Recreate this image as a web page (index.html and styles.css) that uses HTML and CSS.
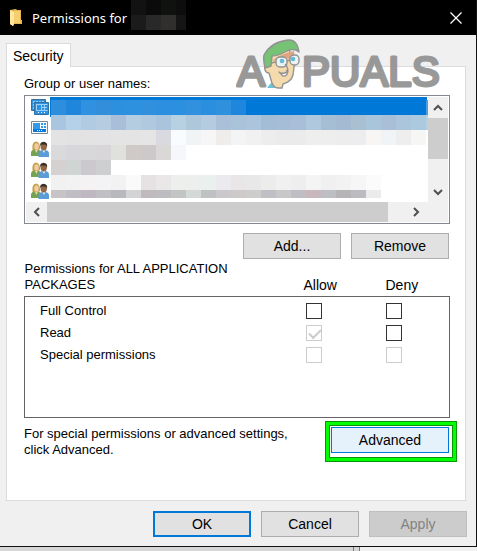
FILE: index.html
```html
<!DOCTYPE html>
<html lang="en">
<head>
<meta charset="utf-8">
<title>Permissions</title>
<link rel="stylesheet" href="styles.css">
</head>
<body>
<svg class="defs" aria-hidden="true">
  <symbol id="users" viewBox="0 0 18 16">
    <path d="M0 15V12Q0 9 3 8.500L7 8.500Q10 9 10 12V15Z" fill="#74a453"/>
    <path d="M3.500 8H7L5.500 12Z" fill="#f2d3b0"/>
    <path d="M1.500 9Q0.500 1 5 0.500Q9.500 1 9 8L7 9H3Z" fill="#c3a14a"/>
    <ellipse cx="5.500" cy="5.500" rx="2.200" ry="3.200" fill="#f0cda6"/>
    <path d="M7.500 16V12.500Q8 9.500 11 9H14.500Q18 9.500 18 12.500V16Z" fill="#5b9bd8"/>
    <path d="M11 8.500H14.500L13 12Z" fill="#e8f0f7"/>
    <ellipse cx="12.700" cy="5.500" rx="3.200" ry="4" fill="#936744"/>
    <path d="M9.300 5Q8.500 1 12.500 0.700Q17 1 16 6L15 3.800L10.500 3.500Z" fill="#3a3027"/>
  </symbol>
  <symbol id="package" viewBox="0 0 17 13">
    <path d="M.5.500H16.500V12.500H.500Z" fill="#fff" stroke="#7d8791"/>
    <path d="M2 2H9V8H2ZM10 2H12V4H10ZM13 2H15V4H13ZM10 5H12V7H10ZM13 5H15V7H13Z" fill="#3198ea"/>
    <path d="M2 8H15V11H2Z" fill="#0879d9"/>
    <path d="M6 9H7V10H6ZM8 9H9V10H8ZM10 9H11V10H10Z" fill="#fff"/>
  </symbol>
</svg>
<main class="dialog">
  <header class="titlebar">
    <svg class="folder" viewBox="0 0 13 18" aria-hidden="true">
      <path d="M0 1L6 0 7 1H11V11H12V15H4L3 17 0 15Z" fill="#e6b74d"/>
      <path d="M0 1L4 3V15L3 17 0 15Z" fill="#ffe69a"/>
      <path d="M4 2H10V14H4Z" fill="#f6cf70"/>
    </svg>
    <h1>Permissions for</h1>
    <svg class="title-mask" viewBox="0 0 55 30" aria-hidden="true">
      <path d="M0 0H55V30H0Z" fill="#0d0d0d"/>
      <path d="M0 0H15V15H0Z" fill="#121212"/><path d="M15 0H30V15H15Z" fill="#0a0b0a"/><path d="M30 0H45V15H30Z" fill="#101210"/>
      <path d="M0 15H15V30H0Z" fill="#1b1b1b"/><path d="M15 15H30V30H15Z" fill="#292929"/><path d="M30 15H45V30H30Z" fill="#302f2e"/><path d="M45 15H55V30H45Z" fill="#151515"/>
    </svg>
    <button class="close" type="button" aria-label="Close">
      <svg viewBox="0 0 12 12"><path d="M.5.500L11.500 11.500M11.500.500L.500 11.500" stroke="#fff" stroke-width="1.300"/></svg>
    </button>
  </header>

  <div class="body">
    <div class="tabs" role="tablist"><button class="tab" type="button" role="tab" aria-selected="true">Security</button></div>
    <section class="panel">
      <h2>Group or user names:</h2>
      <div class="listbox">
        <ul class="names">
          <li class="selected">
            <svg class="icon" viewBox="0 0 18 16" aria-hidden="true">
              <path d="M.5.500H14.500V11.500H.500Z" fill="#3391df" stroke="#34719f"/>
              <path d="M2 2.500H13M2.500 2V10M8.500 2V5M2 9.500H5" stroke="#8bc7f5" stroke-dasharray="2 1"/>
              <path d="M3.500 3.500H17.500V15.500H3.500Z" fill="#2d91e3" stroke="#34719f"/>
              <path d="M5 5.500H16.500M5.500 5V11.500H16.500M10.500 5V11M13.500 5V11M10 8.500H16" fill="none" stroke="#9bd0f8"/>
              <path d="M7 13.500H14" stroke="#fff" stroke-dasharray="1 2"/>
            </svg><span class="name"></span></li>
          <li><svg class="icon package" aria-hidden="true"><use href="#package"/></svg></li>
          <li><svg class="icon" aria-hidden="true"><use href="#users"/></svg></li>
          <li><svg class="icon" aria-hidden="true"><use href="#users"/></svg></li>
          <li><svg class="icon" aria-hidden="true"><use href="#users"/></svg></li>
        </ul>
        <svg class="mosaic" viewBox="0 0 377 99" shape-rendering="crispEdges" aria-hidden="true"></svg>
        <div class="vscroll">
          <button type="button" aria-label="Scroll up"><svg viewBox="0 0 10 10"><path d="M1 7L5 3 9 7"/></svg></button>
          <span class="thumb"></span>
          <button class="end" type="button" aria-label="Scroll down"><svg viewBox="0 0 10 10"><path d="M1 3L5 7 9 3"/></svg></button>
        </div>
        <div class="hscroll">
          <button type="button" aria-label="Scroll left"><svg viewBox="0 0 10 10"><path d="M7 1L3 5 7 9"/></svg></button>
          <span class="thumb"></span>
          <button class="end" type="button" aria-label="Scroll right"><svg viewBox="0 0 10 10"><path d="M3 1L7 5 3 9"/></svg></button>
        </div>
      </div>

      <div class="actions">
        <button class="btn" type="button">Add...</button>
        <button class="btn" type="button">Remove</button>
      </div>

      <table class="permissions">
        <thead>
          <tr><th class="subject" scope="col">Permissions for ALL APPLICATION PACKAGES</th><th class="choice" scope="col">Allow</th><th class="choice deny" scope="col">Deny</th></tr>
        </thead>
        <tbody>
          <tr><th scope="row">Full Control</th><td><input type="checkbox" aria-label="Allow Full Control"></td><td><input type="checkbox" aria-label="Deny Full Control"></td></tr>
          <tr><th scope="row">Read</th><td><input type="checkbox" aria-label="Allow Read" checked disabled></td><td><input type="checkbox" aria-label="Deny Read"></td></tr>
          <tr><th scope="row">Special permissions</th><td><input type="checkbox" aria-label="Allow Special permissions" disabled></td><td><input type="checkbox" aria-label="Deny Special permissions" disabled></td></tr>
          <tr class="filler"><td colspan="3"></td></tr>
        </tbody>
      </table>

      <div class="advanced">
        <p>For special permissions or advanced settings, click Advanced.</p>
        <div class="highlight"><button class="btn" type="button">Advanced</button></div>
      </div>

      <svg class="brand" viewBox="0 0 214 64" role="img" aria-label="Appuals">
        <g class="brand-text"><text x="1" y="49">A</text><text x="66" y="49">PUALS</text></g>
        <g stroke="#8e8e8e" stroke-width="1.400" stroke-linejoin="round">
          <path d="M31 51Q34 47 36 45L39 47 45 51Z" fill="#65bfd6" stroke="none"/>
          <path d="M31 29Q28 29 29 33Q30 36 33 36L36 46Q38 51 42 51H46L47 47Q55 45 57 38L59 23 51 10 35 17Z" fill="#f5d9a9"/>
          <path d="M36 24Q44 17 58 14L59 23Q52 20 42 23Z" fill="#dea27b" stroke="none"/>
          <path d="M29 31Q27 22 28 18Q35 5 52 3Q61 2 63 15Q57 10 49 15Q42 19 36 19L35 29Z" fill="#70c16f"/>
          <rect x="40" y="20" width="11" height="10" rx="4" fill="#edf3f4"/>
          <rect x="54" y="18" width="9" height="10" rx="4" fill="#edf3f4"/>
          <path d="M51 24L54 23M40 25L35 26" fill="none"/>
          <path d="M49 27Q54 33 50 34" fill="none"/>
          <path d="M43 35Q48 38 52 34Q51 40 47 39Z" fill="#fff"/>
          <circle cx="46" cy="24" r="2.300" fill="#58b9d6" stroke="none"/>
          <circle cx="57" cy="22" r="2.300" fill="#58b9d6" stroke="none"/>
        </g>
      </svg>
    </section>

    <footer class="footer">
      <button class="btn default" type="button">OK</button>
      <button class="btn" type="button">Cancel</button>
      <button class="btn" type="button" disabled>Apply</button>
    </footer>
  </div>
</main>
<div class="behind"><span></span><span></span></div>
<script src="mosaic.js"></script>
</body>
</html>
```
FILE: styles.css
```css
* { box-sizing: border-box; }

body {
  margin: 0;
  min-height: 100vh;
  display: flex;
  flex-direction: column;
  background: #d6d6d6;
  color: #000;
  font: 13px/16px "Liberation Sans", Arial, sans-serif;
}

.defs { position: absolute; width: 0; height: 0; }
svg { display: block; flex: none; }
h1, h2, p, ul { margin: 0; padding: 0; font-size: inherit; font-weight: 400; }
button { font: inherit; color: inherit; }

.dialog {
  background: #f0f0f0;
  border-right: 1px solid #111;
  border-bottom: 1px solid #111;
}

.titlebar {
  display: flex;
  align-items: center;
  height: 35px;
  padding: 0 14px 0 10px;
  background: #000;
  color: #fff;
}
.titlebar h1 { margin-left: 9px; width: 99px; white-space: nowrap; font: 13px/20px "Noto Sans", sans-serif; }
.folder { width: 13px; height: 18px; }
.title-mask { width: 55px; height: 30px; align-self: flex-start; }
.close { margin-left: auto; padding: 0; border: 0; background: none; }
.close svg { width: 12px; height: 12px; }

.body { padding: 8px 9px 9px 6px; }
.tabs { display: flex; }
.tab {
  position: relative;
  z-index: 1;
  height: 24px;
  margin-bottom: -1px;
  padding: 0 6px;
  border: 1px solid #dcdcdc;
  border-bottom: 0;
  background: #fff;
  font-size: 14px;
}

.panel {
  position: relative;
  height: auto;
  margin-right: 1px;
  padding: 9px 15px 42px 17px;
  border: 1px solid #dcdcdc;
  background: #fff;
}

.brand { position: absolute; top: -30px; right: 15px; width: 214px; height: 64px; opacity: .95; pointer-events: none; }
.brand-text {
  font: 400 42px "Liberation Sans", Arial, sans-serif;
  fill: #949494;
  stroke: #949494;
  stroke-width: 3;
  stroke-linejoin: round;
}

.listbox {
  position: relative;
  display: grid;
  grid-template-columns: 1fr 20px;
  grid-template-rows: 105px 20px;
  margin-top: 3px;
  padding: 1px;
  border: 1px solid #828790;
}
.names { list-style: none; }
.names li { display: flex; align-items: center; height: 21px; padding-left: 5px; }
.names .selected { height: 20px; }
.name { flex: 1; align-self: stretch; margin: 0 1px 0 1px; background: #0078d7; }
.icon { width: 18px; height: 16px; }
.icon.package { width: 17px; height: 13px; }
.mosaic { position: absolute; left: 26px; top: 4px; width: 377px; height: 99px; }

.vscroll, .hscroll { display: flex; background: #f0f0f0; }
.vscroll { flex-direction: column; }
.hscroll { grid-column: 1 / 3; padding-right: 22px; }
.vscroll button, .hscroll button { display: grid; place-items: center; width: 21px; height: 20px; padding: 0; border: 0; background: none; }
.vscroll button { width: 20px; height: 21px; }
.vscroll svg, .hscroll svg { width: 10px; height: 10px; fill: none; stroke: #505050; stroke-width: 2; }
.vscroll .thumb { height: 41px; background: #cdcdcd; }
.hscroll .thumb { width: 341px; background: #cdcdcd; }
.end { margin: auto 0 0 auto; }

.btn {
  width: 98px;
  height: 26px;
  padding: 0;
  border: 1px solid #adadad;
  background: #e1e1e1;
  font-size: 14px;
}
.btn.default { border: 2px solid #0078d7; }
.btn:disabled { border-color: #bfbfbf; background: #ccc; color: #838383; }
.actions, .footer { display: flex; justify-content: flex-end; gap: 10px; }
.actions { margin-top: 9px; padding-right: 1px; }
.footer { margin-top: 10px; }

.permissions { width: 100%; margin-top: 1px; border-collapse: collapse; table-layout: fixed; }
.permissions th { padding: 0; text-align: left; font-weight: 400; }
.permissions thead th { padding-top: 1px; padding-bottom: 3px; vertical-align: bottom; }
.permissions thead .subject { padding-right: 60px; }
.permissions .choice { width: 80px; padding-left: 2px; font-size: 14px; }
.permissions .deny { width: 68px; padding-left: 4px; }
.permissions tbody { border: 1px solid #646464; }
.permissions tbody tr { height: 22px; }
.permissions tbody th { padding-left: 15px; }
.permissions td { padding: 0 0 0 4px; }
.permissions tbody tr:first-child { height: 25px; }
.permissions tbody tr:first-child > * { padding-top: 3px; }
.permissions tbody .filler { height: 52px; }

input[type="checkbox"] {
  appearance: none;
  display: block;
  width: 16px;
  height: 16px;
  margin: 0;
  border: 1px solid #333;
  background: #fff;
}
input[type="checkbox"]:disabled { border-color: #ccc; }
input[type="checkbox"]:checked::before {
  content: "";
  display: block;
  width: 10px;
  height: 5px;
  margin: 3px 2px;
  border: solid #ccc;
  border-width: 0 0 2px 2px;
  transform: rotate(-45deg);
}

.advanced { display: flex; justify-content: space-between; margin-top: 8px; }
.advanced p { flex: 1; max-width: 280px; }
.highlight { position: relative; height: 26px; margin: 1px 1px 0 0; }
.highlight::before {
  content: "";
  position: absolute;
  inset: -6px -8px -9px -6px;
  border: 4px solid #0f0;
  outline: 1px solid #079507;
  outline-offset: -1px;
  box-shadow: inset 0 0 0 1px #079507;
  pointer-events: none;
}
.highlight .btn { width: 118px; border-color: #0078d7; background: #e5f1fb; position: relative; }

.behind { flex: 1; display: flex; min-height: 4px; }
.behind span:first-child { width: 354px; border-right: 1px solid #777; }
.behind span:last-child { flex: 1; margin-left: 5px; border-left: 1px solid #777; background: #f0f0f0; }
```
FILE: mosaic.js
```js
// Each row: top, height, then one colour per 15px cell ("-" leaves a cell clear).
const rows = [
  [0, 15, "2f8ddd 1f86dc 2f91df 328edb 2c90df 2d91e0 3090dd 2d8fdf 2b90e0 3191de 2b8fdf 2f91de 1e86dc - - - - - - - - - - - - 4c9de0"],
  [15, 15, "a9c5df b5d1e8 b0cbe2 b6cde1 a9bfd9 b4cde1 b0c9df a9c4dc b7d0e2 afc7da b5cce0 a9c0d8 a9c3d8 adc5dc a3bdd6 a5bdd6 a9bfd8 afc8dd a5bed3 a3bad2 a9bfd2 a9c5dc a9bed7 abc6dc abc9df b5d1e4"],
  [30, 15, "e3e3e4 e2e2e3 e4e3e3 e3e3e5 e5e4e5 e4e4e4 e5e5e5 d9d9df f9fcfe f1f4f4 f5f6f5 efecec f2f4f5 f1f1f1 ededed ebebeb ebebeb eeeeee eeeeee ededee ededef f7f6f4 f1f4f6 eeeeef f6f6f5"],
  [45, 15, "dad9db d7d6da d8d8da d8d6d8 e0e0dd cfcac8 cdc8ca d9d8d6 f5f7fc"],
  [60, 15, "d4d1d0 d0d4d2 ccc9ce cecfd1"],
  [75, 15, "f1f1f1 f2f2f2 f5f2f4 f3f3f5 f2f2f3 fafafa e6e2e4 e9e7e8 edefed ecefee eaf0ed ebebed e9e6e7 e8e8e8 ececec f0f0f0 eeeeee f4f4f4 f0f0f0 f2f2f2 f6f6f7 fbfbfb"],
  [90, 8, "c7c3c6 c0bdc4 bfb8c0 bfbfc4 b8b9bc d3d4d5 c0b9bd bdbcc1 c3c5c5 d3d9d6 bfc2c3 cac8cc cfcaca cdcecb c0bfc5 c8c8c8 bebec4 c8b8bd bebfc5 b6b4b6 bcbbc1 ebebeb"]
];
const mosaic = document.querySelector(".mosaic");
for (const [y, height, colours] of rows) {
  colours.split(" ").forEach((colour, i) => {
    if (colour === "-") return;
    const cell = document.createElementNS("http://www.w3.org/2000/svg", "rect");
    cell.setAttribute("x", i * 15);
    cell.setAttribute("y", y);
    cell.setAttribute("width", 15);
    cell.setAttribute("height", height);
    cell.setAttribute("fill", "#" + colour);
    mosaic.append(cell);
  });
}
```
